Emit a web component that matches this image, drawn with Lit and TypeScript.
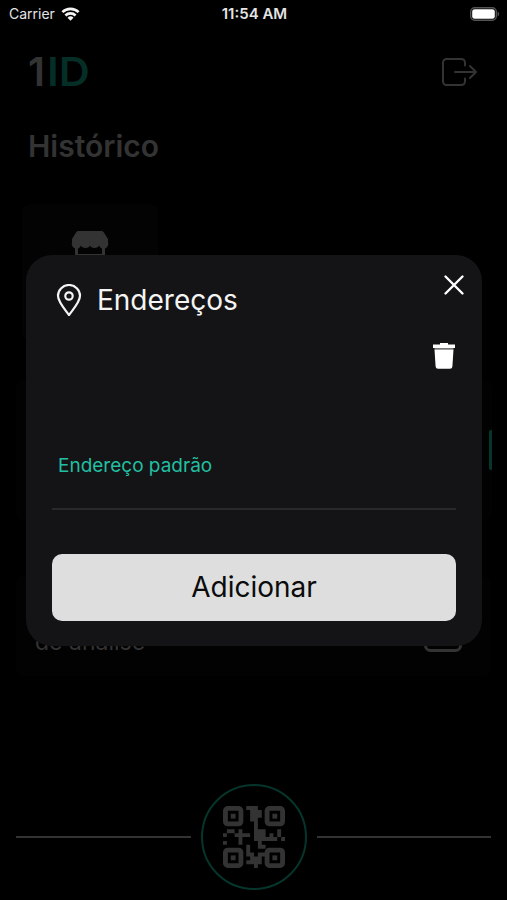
import { LitElement, html, svg, css } from "lit";
import { customElement } from "lit/decorators.js";

/* QR glyph modules between the three-ring corner markers, 16 x 16 */
const MODULES = [
  "......###.......",
  ".......###......",
  ".......###......",
  ".......##.......",
  "........#.......",
  "........#.......",
  ".##.#...###...#.",
  "#..####.###.#.#.",
  "....#...######.#",
  "#...#....#......",
  "......#..##.....",
  "......#.........",
  "......##.##.....",
  ".......###......",
  "......####......",
  "........#.......",
];

const modulePath = MODULES.map((row, y) =>
  [...row].map((cell, x) => (cell === "#" ? `M${x * 4} ${y * 4}h4v4h-4z` : "")).join(""),
).join("");

const corner = (x: number, y: number) => svg`
  <rect x=${x + 2.5} y=${y + 2.5} width="16" height="16" rx="2.5" fill="none" stroke="#333" stroke-width="5" />
  <rect x=${x + 8} y=${y + 8} width="5" height="5" />
`;

@customElement("app-root")
export class AppRoot extends LitElement {
  static styles = css`
    :host {
      display: block;
      background: #000;
      color: #fff;
      font-family: Inter, "Liberation Sans", sans-serif;
    }
    * {
      box-sizing: border-box;
    }
    button {
      border: 0;
      padding: 0;
      margin: 0;
      background: none;
      color: inherit;
      font: inherit;
      cursor: pointer;
    }
    svg {
      display: block;
    }
    .screen {
      position: relative;
      min-height: 100vh;
      display: flex;
      flex-direction: column;
    }
    .status {
      display: grid;
      grid-template-columns: 1fr auto 1fr;
      align-items: center;
      height: 27px;
      padding: 0 7px 0 9px;
      font-size: 14px;
      color: #e4e4e4;
    }
    .carrier {
      display: flex;
      align-items: center;
      gap: 6px;
    }
    .time {
      font-size: 15px;
      font-weight: 600;
    }
    .battery {
      justify-self: end;
    }
    .page {
      flex: 1;
      display: flex;
      flex-direction: column;
      color: #333;
    }
    .top {
      display: flex;
      align-items: center;
      justify-content: space-between;
      padding: 20px 29px 0 28px;
    }
    .logo {
      display: flex;
      align-items: baseline;
      gap: 2px;
      font-size: 40px;
      line-height: 48px;
      font-weight: 600;
    }
    .logo-id {
      color: #052e26;
      font-family: Lato, Inter, sans-serif;
      font-weight: 700;
    }
    h1 {
      margin: 32px 28px 0;
      font-size: 30px;
      line-height: 36px;
      font-weight: 600;
    }
    .tile {
      width: 136px;
      height: 136px;
      margin: 40px 22px 0;
      padding-top: 24px;
      border-radius: 8px;
      background: #030303;
      display: flex;
      justify-content: center;
      align-items: flex-start;
    }
    .card {
      margin: 40px 15px 0 16px;
      height: 140px;
      background: #020202;
      border-radius: 8px;
      display: flex;
      align-items: center;
      justify-content: flex-end;
    }
    .marker {
      width: 3px;
      height: 40px;
      border-radius: 2px 0 0 2px;
      background: #06362b;
    }
    .review {
      margin: 56px 16px 0;
      height: 100px;
      padding: 0 29px 20px 19px;
      border-radius: 8px;
      background: #020202;
      display: flex;
      align-items: flex-end;
      justify-content: space-between;
      font-size: 23px;
      line-height: 28px;
    }
    .review-icon {
      margin-bottom: 4px;
    }
    .dock {
      margin-top: auto;
      padding: 0 16px 10px;
      display: flex;
      align-items: center;
      gap: 10px;
    }
    .line {
      flex: 1;
      height: 2px;
      background: #333;
    }
    .scan {
      width: 106px;
      height: 106px;
      border: 2px solid #05352b;
      border-radius: 50%;
      display: grid;
      place-items: center;
    }
    .overlay {
      position: absolute;
      inset: 0;
      display: grid;
      align-items: center;
      padding: 0 25px 0 26px;
    }
    .dialog {
      background: #141416;
      border-radius: 26px;
      padding: 17px 26px 25px;
      display: flex;
      flex-direction: column;
    }
    .head {
      display: flex;
      align-items: flex-start;
      justify-content: space-between;
      margin-right: -10px;
    }
    h2 {
      display: flex;
      align-items: center;
      gap: 15px;
      margin: 10px 0 0 4px;
      font-size: 28px;
      line-height: 36px;
      font-weight: 400;
      color: #f4f4f4;
    }
    .address {
      height: 168px;
      margin-top: 24px;
      display: flex;
      flex-direction: column;
      justify-content: space-between;
      border-bottom: 2px solid #29292b;
      padding-bottom: 28px;
    }
    .trash {
      align-self: flex-end;
    }
    .default {
      padding-left: 6px;
      font-size: 19px;
      line-height: 28px;
      color: #22bfa2;
    }
    .add {
      height: 67px;
      margin-top: 44px;
      border-radius: 10px;
      background: #dedede;
      color: #0b0b0b;
      font-size: 28px;
    }
  `;

  render() {
    return html`
      <div class="screen">
        <div class="status">
          <div class="carrier">
            <span>Carrier</span>
            <svg width="19" height="14" viewBox="0 0 18 14" fill="none" stroke="#f4f4f4" stroke-width="2.6">
              <path d="M.9 5.200a11.500 11.500 0 0 1 16.200 0" />
              <path d="M3.900 8.500a7.300 7.300 0 0 1 10.200 0" />
              <path d="M9 13.800 6 10.800a4.300 4.300 0 0 1 6 0Z" fill="#f4f4f4" stroke="none" />
            </svg>
          </div>
          <span class="time">11:54 AM</span>
          <svg class="battery" width="30" height="14" viewBox="0 0 30 14">
            <rect x=".7" y=".7" width="25.6" height="12.6" rx="4" fill="none" stroke="#555" stroke-width="1.4" />
            <rect x="2.200" y="2.200" width="22.600" height="9.600" rx="2.400" fill="#fff" />
            <path d="M27.600 4.600a2.600 2.600 0 0 1 0 4.800Z" fill="#555" />
          </svg>
        </div>

        <main class="page">
          <header class="top">
            <div class="logo">1<span class="logo-id">ID</span></div>
            <button aria-label="Sair">
              <svg width="37" height="28" viewBox="0 0 37 28" fill="none" stroke="#333" stroke-width="2" stroke-linecap="round" stroke-linejoin="round">
                <path d="M24 7.500V4.500A3.500 3.500 0 0 0 20.500 1H5.500A3.500 3.500 0 0 0 2 4.500v19A3.500 3.500 0 0 0 5.500 27h15a3.500 3.500 0 0 0 3.500-3.500v-3M14 14h21M29 8l6 6-6 6" />
              </svg>
            </button>
          </header>
          <h1>Histórico</h1>
          <section class="tile">
            <svg width="38" height="36" viewBox="0 0 38 36" fill="#333">
              <path d="M7.500 3h23q1.500 0 2.400 1.400L37 11v3.500a4 4 0 0 1-9 3 4.600 3 0 0 1-9 0 4.600 3 0 0 1-9 0A4 4 0 0 1 1 14.500V11l4-6.600Q6 3 7.500 3Z" />
              <path d="M4 20h3v6h24v-6h3v15H4Z" />
            </svg>
          </section>
          <section class="card"><div class="marker"></div></section>
          <section class="review">
            <span>de análise</span>
            <svg class="review-icon" width="38" height="28" viewBox="0 0 38 28" fill="none" stroke="#333" stroke-width="3">
              <rect x="1.500" y="1.500" width="35" height="25" rx="5" />
            </svg>
          </section>
          <nav class="dock">
            <div class="line"></div>
            <button class="scan" aria-label="Ler código QR">
              <svg width="62" height="62" viewBox="0 0 64 64" fill="#333">
                ${corner(0, 0)} ${corner(43, 0)} ${corner(0, 43)} ${corner(43, 43)}
                <path d=${modulePath} />
              </svg>
            </button>
            <div class="line"></div>
          </nav>
        </main>

        <div class="overlay">
          <section class="dialog" role="dialog" aria-modal="true" aria-labelledby="title">
            <div class="head">
              <h2 id="title">
                <svg width="26" height="32" viewBox="0 0 26 32" fill="none" stroke="#f4f4f4" stroke-width="2.200">
                  <path d="M13 31C9 25.500 2 18 2 11.800a11 10.800 0 0 1 22 0C24 18 17 25.500 13 31Z" stroke-linejoin="round" />
                  <circle cx="13" cy="12" r="3.700" />
                </svg>
                Endereços
              </h2>
              <button aria-label="Fechar">
                <svg width="24" height="26" viewBox="0 0 24 26" fill="none" stroke="#fff" stroke-width="2.400" stroke-linecap="round">
                  <path d="m3.500 4.500 17 17M20.500 4.500l-17 17" />
                </svg>
              </button>
            </div>
            <div class="address">
              <button class="trash" aria-label="Excluir">
                <svg width="24" height="28" viewBox="0 0 24 28" fill="#fff">
                  <path d="M1 2.500h7V1h8v1.500h7V6H1Z" />
                  <path d="M2.500 6h19v1.500h-19Z" fill="#777" />
                  <path d="M2.500 7.500h19L20.400 24.500a2.500 2.500 0 0 1-2.500 2.300H6.100a2.500 2.500 0 0 1-2.500-2.300Z" />
                </svg>
              </button>
              <span class="default">Endereço padrão</span>
            </div>
            <button class="add">Adicionar</button>
          </section>
        </div>
      </div>
    `;
  }
}
